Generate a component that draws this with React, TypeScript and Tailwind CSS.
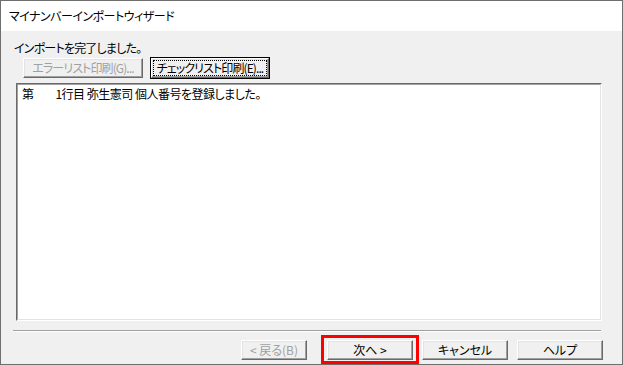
import React from 'react';

function Btn({
  label,
  disabled,
  isDefault,
  className,
}: {
  label: string;
  disabled?: boolean;
  isDefault?: boolean;
  className?: string;
}) {
  return (
    <div
      className={
        'box-border h-[22px] flex bg-[#f0f0f0] text-[12px] leading-none ' +
        (isDefault ? 'border border-black ' : 'border border-transparent ') +
        (className ?? '')
      }
    >
      <div className="flex-1 min-w-0 box-border border border-t-white border-l-white border-r-[#696969] border-b-[#696969] shadow-[inset_-1px_-1px_0_#a0a0a0,inset_1px_1px_0_#e3e3e3] flex p-[2px]">
        <span
          className={
            'flex-1 flex items-center justify-center whitespace-nowrap ' +
            (disabled ? 'text-[#a0a0a0] ' : 'text-black ') +
            (isDefault ? 'outline outline-1 outline-dotted outline-black' : '')
          }
        >
          {label}
        </span>
      </div>
    </div>
  );
}

export default function App() {
  return (
    <div className="w-[623px] h-[365px] box-border border border-[#6e6e6e] bg-[#f0f0f0] flex flex-col text-black font-['Noto_Sans_CJK_JP','Noto_Sans',sans-serif] [font-feature-settings:'palt']">
      <div className="h-[30px] bg-white flex items-center pl-[8px] text-[12px] tracking-[-0.5px]">
        マイナンバーインポートウィザード
      </div>
      <div className="flex-1 flex flex-col">
        <div className="pl-[13px] pt-[10px] h-[26px] text-[12px] leading-[14px] tracking-[-0.8px]">インポートを完了しました。</div>
        <div className="flex gap-[6px] pl-[21px] tracking-[-0.9px]">
          <Btn label="エラーリスト印刷(G)..." disabled className="w-[122px]" />
          <Btn label="チェックリスト印刷(E)..." isDefault className="w-[120px]" />
        </div>
        <div className="mt-[4px] ml-[15px] w-[586px] h-[238px] box-border border border-t-[#696969] border-l-[#696969] border-r-white border-b-white">
          <div className="h-full box-border border border-t-[#a0a0a0] border-l-[#a0a0a0] border-r-[#e3e3e3] border-b-[#e3e3e3] bg-white pl-[4px] pt-[1px] text-[12px] leading-[15px] whitespace-pre tracking-[-0.5px]">
            第          1行目 弥生憲司 個人番号を登録しました。
          </div>
        </div>
        <div className="mt-[9px] ml-[12px] w-[588px] h-[2px] border-t border-t-[#a0a0a0] border-b border-b-white" />
        <div className="flex items-center pl-[239px] mt-[3px]">
          <Btn label="< 戻る(B)" disabled className="w-[68px]" />
          <div className="ml-[13px] box-border border-[3px] border-[#ff0000] p-[2px] w-[98px] h-[29px] flex items-center">
            <Btn label="次へ >" className="w-[88px]" />
          </div>
          <Btn label="キャンセル" className="w-[88px] ml-[2px]" />
          <Btn label="ヘルプ" className="w-[88px] ml-[7px]" />
        </div>
      </div>
    </div>
  );
}
